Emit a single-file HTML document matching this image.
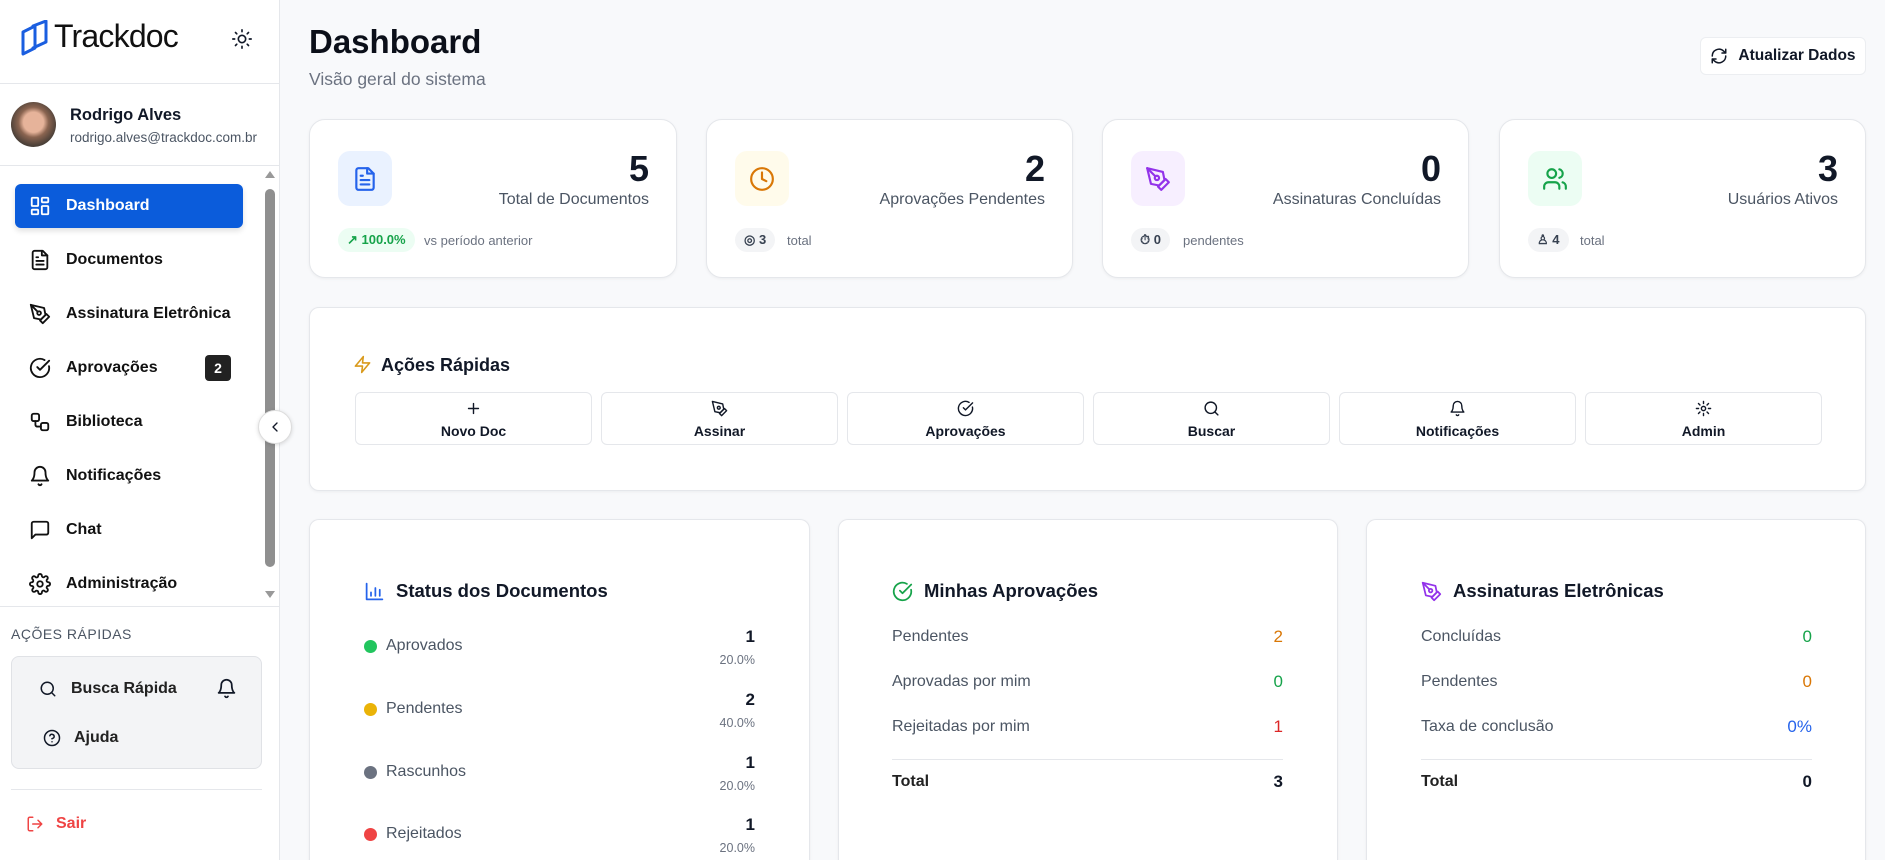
<!DOCTYPE html>
<html><head><meta charset="utf-8"><style>
*{box-sizing:border-box;margin:0;padding:0}
html{width:1885px;height:860px;overflow:hidden}
body{width:1885px;height:860px;overflow:hidden;background:#f8f9fb;font-family:"Liberation Sans",sans-serif;color:#111827;position:relative}
.a{position:absolute}
svg{fill:none;stroke:currentColor;stroke-width:2;stroke-linecap:round;stroke-linejoin:round}
#sb{position:absolute;left:0;top:0;width:280px;height:860px;background:#fff;border-right:1px solid #e5e7eb}
.nav{position:absolute;left:15px;width:228px;height:44px;display:flex;align-items:center;font-size:16px;font-weight:bold;color:#111;padding-left:14px;white-space:nowrap}
.nav svg{width:22px;height:22px;margin-right:15px;flex:none}
.card{position:absolute;background:#fff;border:1px solid #e5e7eb;border-radius:16px;box-shadow:0 1px 3px rgba(0,0,0,.05)}
.ib{position:absolute;left:28px;top:31px;width:54px;height:55px;border-radius:12px;display:flex;align-items:center;justify-content:center}
.ib svg{width:26px;height:26px}
.num{position:absolute;right:27px;top:28px;font-size:36px;font-weight:bold;color:#111827}
.lbl{position:absolute;right:27px;top:71px;font-size:16px;color:#4b5563}
.pill{position:absolute;left:28px;top:108px;height:24px;border-radius:12px;font-size:13px;display:flex;align-items:center;padding:0 9px;font-weight:bold}
.sub{position:absolute;top:113px;font-size:13px;color:#6b7280}
.btn{position:absolute;top:392px;width:237px;height:53px;border:1px solid #e5e7eb;border-radius:6px;background:#fff;text-align:center;font-size:14px;font-weight:bold}
.btn svg{width:17px;height:17px;margin-top:7px;display:block;margin-left:auto;margin-right:auto}
.btn div{margin-top:6px}
.ct{position:absolute;top:580px;font-size:18.5px;font-weight:bold;display:flex;align-items:center}
.ct svg{width:21px;height:21px;margin-right:11px}
.row{position:absolute;font-size:16px;color:#4b5563}
.val{position:absolute;font-size:17px;text-align:right}
</style></head><body>
<div id="sb">
 <div class="a" style="left:20px;top:20px">
  <svg width="30" height="36" viewBox="0 0 30 36" style="stroke:#1a5ee0;stroke-width:3"><path d="M3 12 L15 6 L15 28 L3 34 Z"/><path d="M13 6 L26 1 L26 22 L13 28"/></svg>
 </div>
 <div class="a" style="left:54px;top:18px;font-size:32px;color:#111;letter-spacing:-0.8px">Trackdoc</div>
 <svg class="a" style="left:231px;top:28px;width:22px;height:22px;stroke-width:1.8" viewBox="0 0 24 24"><circle cx="12" cy="12" r="4"/><path d="M12 2v2M12 20v2M4.9 4.9l1.4 1.4M17.7 17.7l1.4 1.4M2 12h2M20 12h2M6.3 17.7l-1.4 1.4M19.1 4.9l-1.4 1.4"/></svg>
 <div class="a" style="left:0;top:83px;width:280px;border-top:1px solid #e5e7eb"></div>
 <div class="a" style="left:11px;top:102px;width:45px;height:45px;border-radius:50%;background:radial-gradient(circle at 50% 45%,#e6b39a 0 30%,#8a6450 45%,#4b4038 70%)"></div>
 <div class="a" style="left:70px;top:106px;font-size:16.5px;font-weight:bold">Rodrigo Alves</div>
 <div class="a" style="left:70px;top:130px;font-size:13.5px;color:#4b5563">rodrigo.alves@trackdoc.com.br</div>
 <div class="a" style="left:0;top:165px;width:280px;border-top:1px solid #e5e7eb"></div>
 <div class="a" style="left:265px;top:171px;width:0;height:0;border-left:5px solid transparent;border-right:5px solid transparent;border-bottom:7px solid #999"></div>
 <div class="a" style="left:265px;top:189px;width:10px;height:378px;border-radius:5px;background:#8f8f8f"></div>
 <div class="a" style="left:265px;top:591px;width:0;height:0;border-left:5px solid transparent;border-right:5px solid transparent;border-top:7px solid #999"></div>
 <div class="nav" style="top:184px;background:#0b5cdb;color:#fff;border-radius:6px;box-shadow:0 3px 6px rgba(0,0,0,.12)"><svg viewBox="0 0 24 24"><rect x="3" y="3" width="7" height="9" rx="1"/><rect x="14" y="3" width="7" height="5" rx="1"/><rect x="14" y="12" width="7" height="9" rx="1"/><rect x="3" y="16" width="7" height="5" rx="1"/></svg>Dashboard</div>
 <div class="nav" style="top:238px"><svg viewBox="0 0 24 24"><path d="M15 2H6a2 2 0 0 0-2 2v16a2 2 0 0 0 2 2h12a2 2 0 0 0 2-2V7Z"/><path d="M14 2v5h6M16 13H8M16 17H8M10 9H8"/></svg>Documentos</div>
 <div class="nav" style="top:292px"><svg viewBox="0 0 24 24"><path d="m12 19 7-7 3 3-7 7-3-3z"/><path d="m18 13-1.5-7.5L2 2l3.5 14.5L13 18l5-5z"/><path d="m2 2 7.6 7.6"/><circle cx="11" cy="11" r="2"/></svg>Assinatura Eletrônica</div>
 <div class="nav" style="top:346px"><svg viewBox="0 0 24 24"><path d="M21.8 10A10 10 0 1 1 17 3.3"/><path d="m9 11 3 3L22 4"/></svg>Aprovações<span style="position:absolute;left:190px;top:9px;width:26px;height:26px;background:#222;color:#fff;border-radius:4px;font-size:14px;text-align:center;line-height:26px">2</span></div>
 <div class="nav" style="top:400px"><svg viewBox="0 0 24 24"><rect x="3" y="3" width="8" height="8" rx="2"/><rect x="13" y="13" width="8" height="8" rx="2"/><path d="M7 11v4a2 2 0 0 0 2 2h4"/></svg>Biblioteca</div>
 <div class="nav" style="top:454px"><svg viewBox="0 0 24 24"><path d="M6 8a6 6 0 0 1 12 0c0 7 3 9 3 9H3s3-2 3-9"/><path d="M10.3 21a1.94 1.94 0 0 0 3.4 0"/></svg>Notificações</div>
 <div class="nav" style="top:508px"><svg viewBox="0 0 24 24"><path d="M21 15a2 2 0 0 1-2 2H7l-4 4V5a2 2 0 0 1 2-2h14a2 2 0 0 1 2 2z"/></svg>Chat</div>
 <div class="nav" style="top:562px"><svg viewBox="0 0 24 24"><circle cx="12" cy="12" r="3"/><path d="M19.4 15a1.7 1.7 0 0 0 .3 1.8l.1.1a2 2 0 1 1-2.8 2.8l-.1-.1a1.7 1.7 0 0 0-1.8-.3 1.7 1.7 0 0 0-1 1.5V21a2 2 0 0 1-4 0v-.1a1.7 1.7 0 0 0-1.1-1.5 1.7 1.7 0 0 0-1.8.3l-.1.1a2 2 0 1 1-2.8-2.8l.1-.1a1.7 1.7 0 0 0 .3-1.8 1.7 1.7 0 0 0-1.5-1H3a2 2 0 0 1 0-4h.1a1.7 1.7 0 0 0 1.5-1.1 1.7 1.7 0 0 0-.3-1.8l-.1-.1a2 2 0 1 1 2.8-2.8l.1.1a1.7 1.7 0 0 0 1.8.3H9a1.7 1.7 0 0 0 1-1.5V3a2 2 0 0 1 4 0v.1a1.7 1.7 0 0 0 1 1.5 1.7 1.7 0 0 0 1.8-.3l.1-.1a2 2 0 1 1 2.8 2.8l-.1.1a1.7 1.7 0 0 0-.3 1.8V9a1.7 1.7 0 0 0 1.5 1H21a2 2 0 0 1 0 4h-.1a1.7 1.7 0 0 0-1.5 1z"/></svg>Administração</div>
 <div class="a" style="left:0;top:606px;width:280px;border-top:1px solid #e5e7eb"></div>
 <div class="a" style="left:11px;top:626px;font-size:14px;color:#4b5563;letter-spacing:.5px">AÇÕES RÁPIDAS</div>
 <div class="a" style="left:11px;top:656px;width:251px;height:113px;background:#f3f4f6;border:1px solid #e0e2e6;border-radius:8px"></div>
 <svg class="a" style="left:39px;top:680px;width:18px;height:18px" viewBox="0 0 24 24"><circle cx="11" cy="11" r="8"/><path d="m21 21-4.3-4.3"/></svg>
 <div class="a" style="left:71px;top:680px;font-size:16px;font-weight:bold;color:#222">Busca Rápida</div>
 <svg class="a" style="left:216px;top:678px;width:21px;height:21px" viewBox="0 0 24 24"><path d="M6 8a6 6 0 0 1 12 0c0 7 3 9 3 9H3s3-2 3-9"/><path d="M10.3 21a1.94 1.94 0 0 0 3.4 0"/></svg>
 <svg class="a" style="left:43px;top:729px;width:18px;height:18px" viewBox="0 0 24 24"><circle cx="12" cy="12" r="10"/><path d="M9.1 9a3 3 0 0 1 5.8 1c0 2-3 3-3 3M12 17h.01"/></svg>
 <div class="a" style="left:74px;top:729px;font-size:16px;font-weight:bold;color:#222">Ajuda</div>
 <div class="a" style="left:11px;top:789px;width:251px;border-top:1px solid #e5e7eb"></div>
 <svg class="a" style="left:26px;top:815px;width:18px;height:18px;color:#ef4444" viewBox="0 0 24 24"><path d="M9 21H5a2 2 0 0 1-2-2V5a2 2 0 0 1 2-2h4M16 17l5-5-5-5M21 12H9"/></svg>
 <div class="a" style="left:56px;top:815px;font-size:16px;font-weight:bold;color:#ef4444">Sair</div>
</div>
<div class="a" style="left:258px;top:410px;width:34px;height:34px;border-radius:50%;background:#fff;border:1px solid #ddd;box-shadow:0 1px 4px rgba(0,0,0,.15);display:flex;align-items:center;justify-content:center"><svg style="width:16px;height:16px" viewBox="0 0 24 24"><path d="m15 18-6-6 6-6"/></svg></div>

<div class="a" style="left:309px;top:23px;font-size:33px;font-weight:bold;color:#0b0f19">Dashboard</div>
<div class="a" style="left:309px;top:69px;font-size:17.5px;color:#6b7280">Visão geral do sistema</div>
<div class="a" style="left:1700px;top:37px;width:166px;height:38px;background:#fff;border:1px solid #eceef1;border-radius:6px;display:flex;align-items:center;justify-content:center;font-size:15.5px;font-weight:bold"><svg style="width:18px;height:18px;margin-right:10px" viewBox="0 0 24 24"><path d="M3 12a9 9 0 0 1 15-6.7L21 8M21 3v5h-5M21 12a9 9 0 0 1-15 6.7L3 16M8 16H3v5"/></svg>Atualizar Dados</div>

<div class="card" style="left:309px;top:119px;width:368px;height:159px">
 <div class="ib" style="background:#eaf2ff;color:#2563eb"><svg viewBox="0 0 24 24"><path d="M15 2H6a2 2 0 0 0-2 2v16a2 2 0 0 0 2 2h12a2 2 0 0 0 2-2V7Z"/><path d="M14 2v5h6M16 13H8M16 17H8M10 9H8"/></svg></div>
 <div class="num">5</div><div class="lbl">Total de Documentos</div>
 <div class="pill" style="background:#ecfdf3;color:#16a34a">↗ 100.0%</div><div class="sub" style="left:114px">vs período anterior</div>
</div>
<div class="card" style="left:706px;top:119px;width:367px;height:159px">
 <div class="ib" style="background:#fffbeb;color:#d97706"><svg viewBox="0 0 24 24"><circle cx="12" cy="12" r="10"/><path d="M12 6v6l4 2"/></svg></div>
 <div class="num">2</div><div class="lbl">Aprovações Pendentes</div>
 <div class="pill" style="background:#f3f4f6;color:#374151">◎ 3</div><div class="sub" style="left:80px">total</div>
</div>
<div class="card" style="left:1102px;top:119px;width:367px;height:159px">
 <div class="ib" style="background:#f7efff;color:#9333ea"><svg viewBox="0 0 24 24"><path d="m12 19 7-7 3 3-7 7-3-3z"/><path d="m18 13-1.5-7.5L2 2l3.5 14.5L13 18l5-5z"/><path d="m2 2 7.6 7.6"/><circle cx="11" cy="11" r="2"/></svg></div>
 <div class="num">0</div><div class="lbl">Assinaturas Concluídas</div>
 <div class="pill" style="background:#f3f4f6;color:#374151">⏱ 0</div><div class="sub" style="left:80px">pendentes</div>
</div>
<div class="card" style="left:1499px;top:119px;width:367px;height:159px">
 <div class="ib" style="background:#ecfdf3;color:#16a34a"><svg viewBox="0 0 24 24"><path d="M16 21v-2a4 4 0 0 0-4-4H6a4 4 0 0 0-4 4v2"/><circle cx="9" cy="7" r="4"/><path d="M22 21v-2a4 4 0 0 0-3-3.9M16 3.1a4 4 0 0 1 0 7.8"/></svg></div>
 <div class="num">3</div><div class="lbl">Usuários Ativos</div>
 <div class="pill" style="background:#f3f4f6;color:#374151">♙ 4</div><div class="sub" style="left:80px">total</div>
</div>

<div class="card" style="left:309px;top:307px;width:1557px;height:184px;border-radius:10px"></div>
<svg class="a" style="left:353px;top:355px;width:19px;height:19px;color:#d99a1c" viewBox="0 0 24 24"><path d="M13 2 3 14h9l-1 8 10-12h-9l1-8z"/></svg>
<div class="a" style="left:381px;top:355px;font-size:18px;font-weight:bold">Ações Rápidas</div>
<div class="btn" style="left:355px"><svg viewBox="0 0 24 24"><path d="M12 5v14M5 12h14"/></svg><div>Novo Doc</div></div>
<div class="btn" style="left:601px"><svg viewBox="0 0 24 24"><path d="m12 19 7-7 3 3-7 7-3-3z"/><path d="m18 13-1.5-7.5L2 2l3.5 14.5L13 18l5-5z"/><circle cx="11" cy="11" r="2"/></svg><div>Assinar</div></div>
<div class="btn" style="left:847px"><svg viewBox="0 0 24 24"><path d="M21.8 10A10 10 0 1 1 17 3.3"/><path d="m9 11 3 3L22 4"/></svg><div>Aprovações</div></div>
<div class="btn" style="left:1093px"><svg viewBox="0 0 24 24"><circle cx="11" cy="11" r="8"/><path d="m21 21-4.3-4.3"/></svg><div>Buscar</div></div>
<div class="btn" style="left:1339px"><svg viewBox="0 0 24 24"><path d="M6 8a6 6 0 0 1 12 0c0 7 3 9 3 9H3s3-2 3-9"/><path d="M10.3 21a1.94 1.94 0 0 0 3.4 0"/></svg><div>Notificações</div></div>
<div class="btn" style="left:1585px"><svg viewBox="0 0 24 24"><circle cx="12" cy="12" r="3"/><path d="M12 2v3M12 19v3M4.9 4.9l2.1 2.1M17 17l2.1 2.1M2 12h3M19 12h3M4.9 19.1 7 17M17 7l2.1-2.1"/></svg><div>Admin</div></div>

<div class="card" style="left:309px;top:519px;width:501px;height:360px;border-radius:10px;border-bottom:none"></div>
<div class="card" style="left:838px;top:519px;width:500px;height:360px;border-radius:10px;border-bottom:none"></div>
<div class="card" style="left:1366px;top:519px;width:500px;height:360px;border-radius:10px;border-bottom:none"></div>

<div class="ct" style="left:364px"><svg viewBox="0 0 24 24" style="color:#2563eb"><path d="M3 3v18h18M8 17v-4M13 17V8M18 17v-7"/></svg>Status dos Documentos</div>
<div class="a" style="left:364px;top:640px;width:13px;height:13px;border-radius:50%;background:#22c55e"></div><div class="row" style="left:386px;top:637px">Aprovados</div><div class="val" style="left:700px;width:55px;top:627px;font-weight:bold">1</div><div class="val" style="left:690px;width:65px;top:653px;font-size:12.5px;color:#6b7280">20.0%</div>
<div class="a" style="left:364px;top:703px;width:13px;height:13px;border-radius:50%;background:#eab308"></div><div class="row" style="left:386px;top:700px">Pendentes</div><div class="val" style="left:700px;width:55px;top:690px;font-weight:bold">2</div><div class="val" style="left:690px;width:65px;top:716px;font-size:12.5px;color:#6b7280">40.0%</div>
<div class="a" style="left:364px;top:766px;width:13px;height:13px;border-radius:50%;background:#6b7280"></div><div class="row" style="left:386px;top:763px">Rascunhos</div><div class="val" style="left:700px;width:55px;top:753px;font-weight:bold">1</div><div class="val" style="left:690px;width:65px;top:779px;font-size:12.5px;color:#6b7280">20.0%</div>
<div class="a" style="left:364px;top:828px;width:13px;height:13px;border-radius:50%;background:#ef4444"></div><div class="row" style="left:386px;top:825px">Rejeitados</div><div class="val" style="left:700px;width:55px;top:815px;font-weight:bold">1</div><div class="val" style="left:690px;width:65px;top:841px;font-size:12.5px;color:#6b7280">20.0%</div>

<div class="ct" style="left:892px"><svg viewBox="0 0 24 24" style="color:#16a34a"><path d="M21.8 10A10 10 0 1 1 17 3.3"/><path d="m9 11 3 3L22 4"/></svg>Minhas Aprovações</div>
<div class="row" style="left:892px;top:628px">Pendentes</div><div class="val" style="left:1200px;width:83px;top:627px;color:#d97706">2</div>
<div class="row" style="left:892px;top:673px">Aprovadas por mim</div><div class="val" style="left:1200px;width:83px;top:672px;color:#16a34a">0</div>
<div class="row" style="left:892px;top:718px">Rejeitadas por mim</div><div class="val" style="left:1200px;width:83px;top:717px;color:#dc2626">1</div>
<div class="a" style="left:892px;top:759px;width:391px;border-top:1px solid #e5e7eb"></div>
<div class="row" style="left:892px;top:773px;font-weight:bold;color:#222">Total</div><div class="val" style="left:1200px;width:83px;top:772px;font-weight:bold">3</div>

<div class="ct" style="left:1421px"><svg viewBox="0 0 24 24" style="color:#9333ea"><path d="m12 19 7-7 3 3-7 7-3-3z"/><path d="m18 13-1.5-7.5L2 2l3.5 14.5L13 18l5-5z"/><path d="m2 2 7.6 7.6"/><circle cx="11" cy="11" r="2"/></svg>Assinaturas Eletrônicas</div>
<div class="row" style="left:1421px;top:628px">Concluídas</div><div class="val" style="left:1730px;width:82px;top:627px;color:#16a34a">0</div>
<div class="row" style="left:1421px;top:673px">Pendentes</div><div class="val" style="left:1730px;width:82px;top:672px;color:#d97706">0</div>
<div class="row" style="left:1421px;top:718px">Taxa de conclusão</div><div class="val" style="left:1730px;width:82px;top:717px;color:#2563eb">0%</div>
<div class="a" style="left:1421px;top:759px;width:391px;border-top:1px solid #e5e7eb"></div>
<div class="row" style="left:1421px;top:773px;font-weight:bold;color:#222">Total</div><div class="val" style="left:1730px;width:82px;top:772px;font-weight:bold">0</div>
</body></html>
